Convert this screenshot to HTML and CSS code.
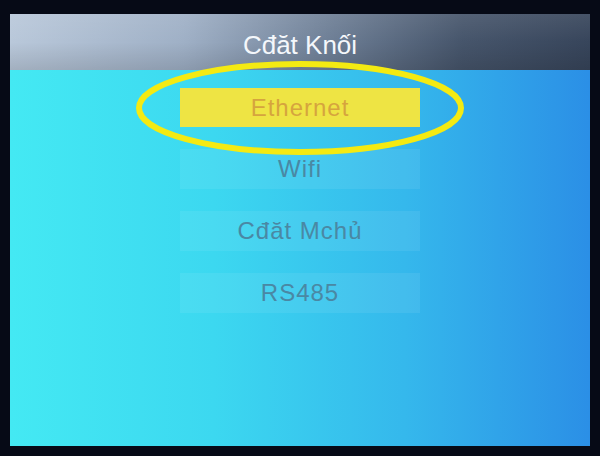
FILE: index.html
```html
<!DOCTYPE html>
<html lang="vi">
<head>
<meta charset="utf-8">
<title>Cđăt Knối</title>
<link rel="stylesheet" href="styles.css">
</head>
<body>
<div class="screen">
  <div class="header">Cđăt Knối</div>
  <div class="menu">
    <div class="item selected">Ethernet</div>
    <div class="item">Wifi</div>
    <div class="item">Cđăt Mchủ</div>
    <div class="item">RS485</div>
  </div>
  <svg class="mark" width="340" height="100" viewBox="0 0 340 100">
    <ellipse cx="170" cy="50" rx="161" ry="44" fill="none" stroke="#f4ea12" stroke-width="6"/>
  </svg>
</div>
</body>
</html>
```
FILE: styles.css
```css
html, body {
  margin: 0;
  padding: 0;
  width: 600px;
  height: 456px;
  background: #060a16;
  overflow: hidden;
}
.screen {
  position: relative;
  margin: 14px 10px 0 10px;
  width: 580px;
  height: 432px;
  display: flex;
  flex-direction: column;
  background: linear-gradient(90deg, #44e9f3 0%, #3cd8f0 35%, #35b8ec 68%, #2b8fe6 100%);
  font-family: "Liberation Sans", Arial, sans-serif;
}
.header {
  height: 56px;
  box-sizing: border-box;
  padding-top: 6px;
  flex: none;
  display: flex;
  align-items: center;
  justify-content: center;
  color: #f4f7fb;
  font-size: 26px;
  background:
    linear-gradient(180deg, rgba(255,255,255,0.08) 0%, rgba(0,0,0,0) 50%, rgba(0,0,0,0.12) 100%),
    linear-gradient(90deg, #b9c8da 0%, #9fb0c6 30%, #6e7f96 55%, #46556b 78%, #37455b 100%);
}
.menu {
  display: flex;
  flex-direction: column;
  align-items: center;
  gap: 22px;
  padding-top: 18px;
}
.item {
  width: 240px;
  height: 40px;
  display: flex;
  align-items: center;
  justify-content: center;
  font-size: 24px;
  letter-spacing: 1px;
  color: #4a88a4;
  background: rgba(255,255,255,0.07);
}
.item.selected {
  background: #eee444;
  color: #d6a43e;
  height: 39px;
}
.mark {
  position: absolute;
  left: 120px;
  top: 44px;
}
```
